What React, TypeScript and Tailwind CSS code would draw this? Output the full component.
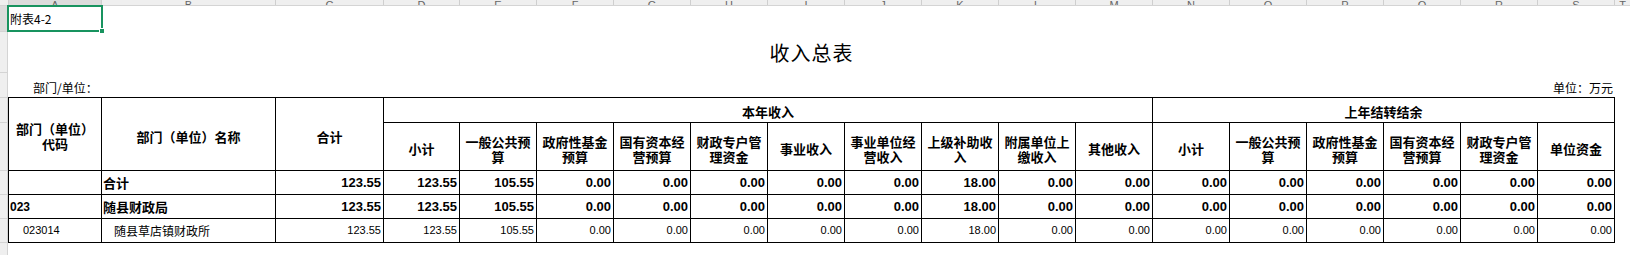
import React from "react";

const CJK = "font-['Noto_Sans_CJK_SC',sans-serif]";
const NUM = "font-['Liberation_Sans',sans-serif]";

const letters = "ABCDEFGHIJKLMNOPQRS".split("");
const stripW = [93, 174, 108, 76, ...Array(15).fill(77)];

type Row = { code: string; name: string; vals: string[]; bold: boolean };

const vals = ["123.55", "123.55", "105.55", "0.00", "0.00", "0.00", "0.00", "0.00", "18.00", "0.00", "0.00", "0.00", "0.00", "0.00", "0.00", "0.00", "0.00"];

const rows: Row[] = [
  { code: "", name: "合计", bold: true, vals },
  { code: "023", name: "随县财政局", bold: true, vals },
  { code: "023014", name: "随县草店镇财政所", bold: false, vals },
];

const curHeads: string[][] = [
  ["小计"],
  ["一般公共预", "算"],
  ["政府性基金", "预算"],
  ["国有资本经", "营预算"],
  ["财政专户管", "理资金"],
  ["事业收入"],
  ["事业单位经", "营收入"],
  ["上级补助收", "入"],
  ["附属单位上", "缴收入"],
  ["其他收入"],
];

const prevHeads: string[][] = [
  ["小计"],
  ["一般公共预", "算"],
  ["政府性基金", "预算"],
  ["国有资本经", "营预算"],
  ["财政专户管", "理资金"],
  ["单位资金"],
];

function Head({ lines, className = "" }: { lines: string[]; className?: string }) {
  return (
    <div className={`bg-white flex flex-col items-center justify-center pt-[4px] text-[13px] leading-[15px] font-bold text-black text-center ${className}`}>
      {lines.map((l, i) => (
        <span key={i}>{l}</span>
      ))}
    </div>
  );
}

export default function App() {
  const gutterRows = [
    { h: 26, sel: true },
    { h: 41, sel: false },
    { h: 25, sel: false },
    { h: 25, sel: false },
    { h: 48, sel: false },
    { h: 24, sel: false },
    { h: 24, sel: false },
    { h: 24, sel: false },
  ];

  return (
    <div className={`w-[1630px] h-[255px] overflow-hidden bg-white text-black ${CJK}`}>
      {/* column header strip */}
      <div className="flex h-[6px] border-b border-[#d4d4d4] bg-[#efefef]">
        <div className="w-[8px] shrink-0" />
        {stripW.map((w, i) => (
          <div
            key={i}
            style={{ width: w }}
            className={`shrink-0 h-full border-l border-[#cfcfcf] overflow-hidden flex items-end justify-center ${i === 0 ? "bg-[#dcdcdc]" : ""}`}
          >
            <span className={`${NUM} text-[11px] leading-[11px] text-[#666] translate-y-[6px]`}>{letters[i]}</span>
          </div>
        ))}
        <div className="flex-1 h-full border-l border-[#cfcfcf] overflow-hidden flex items-end justify-center">
          <span className={`${NUM} text-[11px] leading-[11px] text-[#666] translate-y-[6px]`}>T</span>
        </div>
      </div>

      <div className="flex">
        {/* row gutter */}
        <div className="w-[8px] shrink-0 flex flex-col bg-[#efefef] border-r border-[#d4d4d4] h-[249px]">
          {gutterRows.map((r, i) => (
            <div
              key={i}
              style={{ height: r.h }}
              className={`shrink-0 border-b border-[#d4d4d4] ${r.sel ? "bg-[#dcdcdc]" : ""}`}
            />
          ))}
        </div>

        {/* sheet content */}
        <div className="flex-1 flex flex-col">
          {/* row 1 */}
          <div className="relative h-[25px] flex items-center">
            <span className="pl-[2px] text-[12px] leading-none">附表4-2</span>
            <div className="absolute left-[-1px] top-[-1px] w-[96px] h-[27px] border-2 border-[#18935f]" />
            <div className="absolute left-[91px] top-[22px] w-[6px] h-[6px] bg-[#18935f] border border-white" />
          </div>

          {/* row 2 title */}
          <div className="h-[42px] w-[1607px] flex items-center justify-center pt-[2px]">
            <span className="text-[20px] leading-none tracking-[1px]">收入总表</span>
          </div>

          {/* row 3 */}
          <div className="h-[24px] w-[1607px] flex items-end justify-between pb-[3px] text-[12px] leading-none">
            <span className="pl-[25px]">部门/单位：</span>
            <span className="pr-[2px]">单位：万元</span>
          </div>

          {/* table */}
          <div className="w-[1607px] grid grid-cols-[92px_173px_107px_75px_repeat(15,76px)] grid-rows-[24px_47px_23px_23px_23px] gap-px p-px bg-black">
            <Head lines={["部门（单位）", "代码"]} className="row-span-2" />
            <Head lines={["部门（单位）名称"]} className="row-span-2" />
            <Head lines={["合计"]} className="row-span-2" />
            <Head lines={["本年收入"]} className="col-span-10 !pt-[2px]" />
            <Head lines={["上年结转结余"]} className="col-span-6 !pt-[2px]" />
            {curHeads.map((h, i) => (
              <Head key={`c${i}`} lines={h} />
            ))}
            {prevHeads.map((h, i) => (
              <Head key={`p${i}`} lines={h} />
            ))}

            {rows.map((r, ri) => (
              <React.Fragment key={ri}>
                <div
                  className={`bg-white flex items-center ${NUM} ${
                    r.bold ? "font-bold text-[12px] pl-[1px]" : "text-[11px] pl-[14px]"
                  }`}
                >
                  {r.code}
                </div>
                <div
                  className={`bg-white flex items-center ${
                    r.bold ? "font-bold text-[13px] pl-[1px]" : "text-[12px] pl-[12px]"
                  }`}
                >
                  {r.name}
                </div>
                {r.vals.map((v, vi) => (
                  <div
                    key={vi}
                    className={`bg-white flex items-center justify-end pr-[2px] ${NUM} ${
                      r.bold ? "font-bold text-[13px]" : "text-[11px]"
                    }`}
                  >
                    {v}
                  </div>
                ))}
              </React.Fragment>
            ))}
          </div>
        </div>
      </div>
    </div>
  );
}
